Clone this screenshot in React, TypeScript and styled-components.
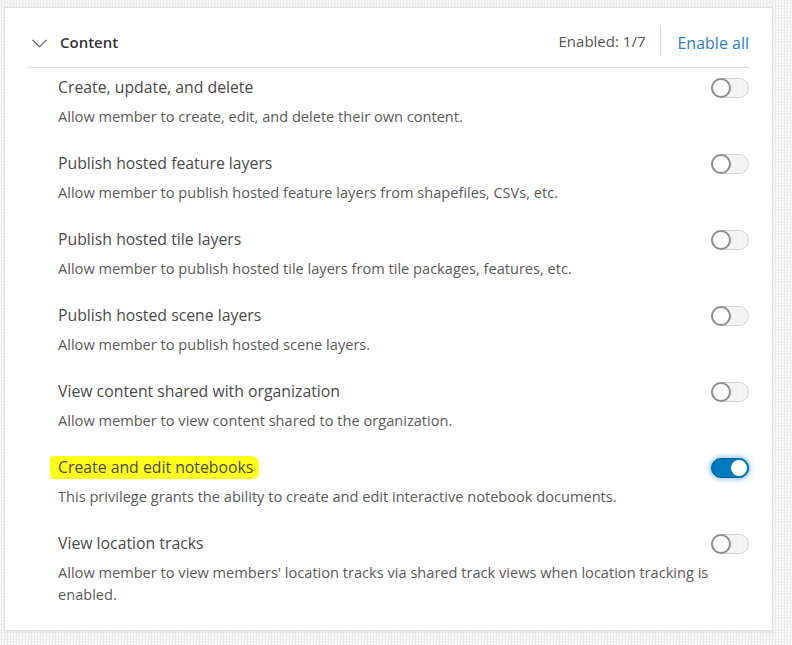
import React from "react";
import styled, { createGlobalStyle } from "styled-components";

const Global = createGlobalStyle`
  html, body { margin: 0; padding: 0; }
  body {
    width: 792px;
    height: 645px;
    overflow: hidden;
    background-color: #f6f6f6;
    background-image: repeating-conic-gradient(#ececec 0% 25%, #fbfbfb 0% 50%);
    background-size: 3px 3px;
    font-family: "Open Sans", "Noto Sans", sans-serif;
  }
`;

const Page = styled.div`
  padding: 7px 19px 0 4px;
`;

const Card = styled.section`
  background: #fff;
  border: 1px solid #e2e2e2;
  box-shadow: 0 1px 2px rgba(0, 0, 0, 0.08);
  padding: 0 23px 7px 23px;
  height: 624px;
  box-sizing: border-box;
`;

const Header = styled.div`
  display: flex;
  align-items: center;
  height: 60px;
  box-sizing: border-box;
  padding: 9px 0 0 4px;
  border-bottom: 1px solid #dcdcdc;
`;

const Chevron = styled.svg`
  width: 15px;
  height: 9px;
  margin-right: 13px;
  margin-top: 3px;
`;

const HeaderTitle = styled.span`
  font-size: 15px;
  font-weight: 600;
  color: #353535;
  flex: 1;
`;

const Count = styled.span`
  font-size: 15px;
  color: #555;
  padding-right: 15px;
  margin-top: -3px;
`;

const Divider = styled.span`
  width: 1px;
  height: 28px;
  background: #d8d8d8;
  margin-right: 16px;
`;

const EnableAll = styled.a`
  font-size: 16px;
  color: #2a7fc1;
  text-decoration: none;
  margin-top: 1px;
`;

const List = styled.div`
  display: flex;
  flex-direction: column;
`;

const Row = styled.div`
  display: grid;
  grid-template-columns: 1fr 38px;
  column-gap: 0;
  padding: 8px 0 17px 30px;
`;

const Texts = styled.div`
  display: flex;
  flex-direction: column;
  gap: 7px;
`;

const Title = styled.div`
  font-size: 15.8px;
  line-height: 22px;
  color: #4a4a4a;
`;

const Highlight = styled.span`
  background: #ffff1a;
  margin-left: -8px;
  padding: 0 6px 0 8px;
  border-radius: 3px 8px 6px 4px;
  box-shadow: 0 1px 0 #ffff1a;
`;

const Desc = styled.div`
  font-size: 14.6px;
  line-height: 22px;
  color: #5a5a5a;
`;

const Toggle = styled.span<{ $on?: boolean }>`
  position: relative;
  display: block;
  width: 38px;
  height: 20px;
  margin-top: 2px;
  box-sizing: border-box;
  border-radius: 10px;
  border: 1px solid ${(p) => (p.$on ? "#005e95" : "#d4d4d4")};
  background: ${(p) => (p.$on ? "#0079c1" : "#f3f3f3")};
  box-shadow: ${(p) => (p.$on ? "0 0 4px 2px rgba(0,121,193,0.35)" : "none")};

  &::after {
    content: "";
    position: absolute;
    top: -1px;
    ${(p) => (p.$on ? "right: -1px;" : "left: -1px;")}
    width: 20px;
    height: 20px;
    box-sizing: border-box;
    border-radius: 50%;
    background: #fff;
    border: 2px solid ${(p) => (p.$on ? "#0079c1" : "#8f8f8f")};
  }
`;

type Item = { title: string; desc: string; on?: boolean; mark?: boolean };

const items: Item[] = [
  { title: "Create, update, and delete", desc: "Allow member to create, edit, and delete their own content." },
  { title: "Publish hosted feature layers", desc: "Allow member to publish hosted feature layers from shapefiles, CSVs, etc." },
  { title: "Publish hosted tile layers", desc: "Allow member to publish hosted tile layers from tile packages, features, etc." },
  { title: "Publish hosted scene layers", desc: "Allow member to publish hosted scene layers." },
  { title: "View content shared with organization", desc: "Allow member to view content shared to the organization." },
  {
    title: "Create and edit notebooks",
    desc: "This privilege grants the ability to create and edit interactive notebook documents.",
    on: true,
    mark: true,
  },
  {
    title: "View location tracks",
    desc: "Allow member to view members' location tracks via shared track views when location tracking is enabled.",
  },
];

export default function App() {
  return (
    <>
      <Global />
      <Page>
        <Card>
          <Header>
            <Chevron viewBox="0 0 15 9">
              <path d="M0.5 0.8 L7.5 7.8 L14.5 0.8" fill="none" stroke="#555" strokeWidth="1.1" />
            </Chevron>
            <HeaderTitle>Content</HeaderTitle>
            <Count>Enabled: 1/7</Count>
            <Divider />
            <EnableAll href="#">Enable all</EnableAll>
          </Header>
          <List>
            {items.map((it) => (
              <Row key={it.title}>
                <Texts>
                  <Title>{it.mark ? <Highlight>{it.title}</Highlight> : it.title}</Title>
                  <Desc>{it.desc}</Desc>
                </Texts>
                <Toggle $on={it.on} />
              </Row>
            ))}
          </List>
        </Card>
      </Page>
    </>
  );
}
